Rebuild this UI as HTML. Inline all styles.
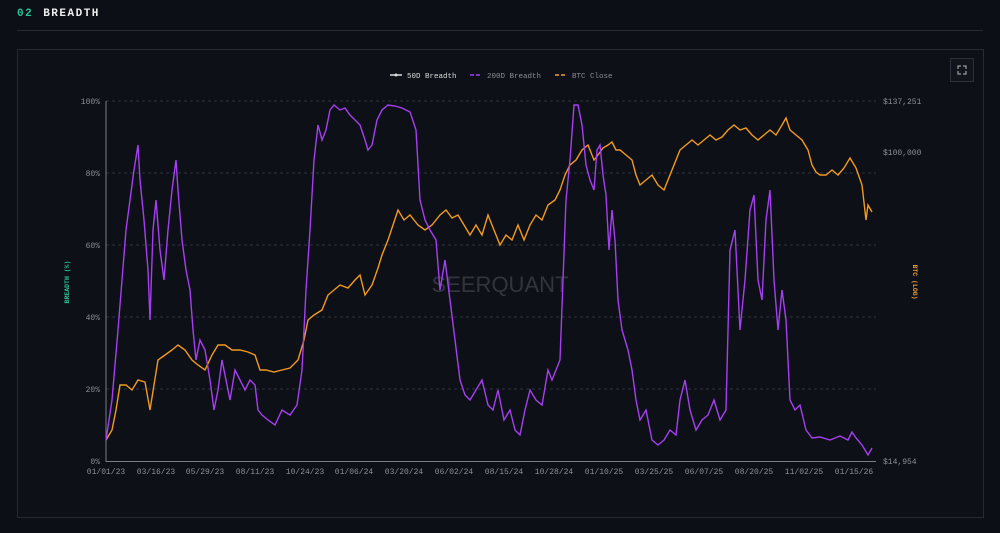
<!DOCTYPE html>
<html><head><meta charset="utf-8"><style>
html,body{margin:0;padding:0;background:#0c0f16;width:1000px;height:533px;overflow:hidden;font-family:"Liberation Mono",monospace}
.h{position:absolute;left:17px;top:8px;font-size:11px;font-weight:bold;letter-spacing:1.5px;color:#eee}
.h span{color:#2fbf9a;margin-right:10px}
.hl{position:absolute;left:17px;top:30px;width:966px;height:1px;background:#262a33}
.panel{position:absolute;left:17px;top:49px;width:965px;height:467px;border:1px solid #262a33;background:#0d1017}
.btn{position:absolute;left:950px;top:58px;width:22px;height:22px;border:1px solid #2c313b;background:#11141b}
</style></head><body>
<div class="h"><span>02</span>BREADTH</div>
<div class="hl"></div>
<div class="panel"></div>
<div class="btn"><svg width="22" height="22"><path d="M7 10V7h3M12 7h3v3M15 12v3h-3M10 15H7v-3" stroke="#bbb" fill="none" stroke-width="1"/></svg></div>
<svg width="1000" height="533" style="position:absolute;left:0;top:0" font-family="Liberation Mono,monospace">
<g stroke="#2e333d" stroke-dasharray="3,3" stroke-width="1">
<line x1="106" y1="101" x2="876" y2="101"/><line x1="106" y1="173" x2="876" y2="173"/><line x1="106" y1="245" x2="876" y2="245"/><line x1="106" y1="317" x2="876" y2="317"/><line x1="106" y1="389" x2="876" y2="389"/>
</g>
<g font-size="8" fill="#8a8f99" text-anchor="end">
<text x="100" y="104">100%</text><text x="100" y="176">80%</text><text x="100" y="248">60%</text><text x="100" y="320">40%</text><text x="100" y="392">20%</text><text x="100" y="464">0%</text>
</g>
<g font-size="8" fill="#8a8f99"><text x="883" y="104">$137,251</text><text x="883" y="155">$100,000</text><text x="883" y="464">$14,954</text></g>
<line x1="106" y1="101" x2="106" y2="462" stroke="#777c86"/>
<line x1="106" y1="461.5" x2="876" y2="461.5" stroke="#777c86"/>
<g font-size="8" fill="#8a8f99" text-anchor="middle">
<text x="106" y="474">01/01/23</text><text x="156" y="474">03/16/23</text><text x="205" y="474">05/29/23</text><text x="255" y="474">08/11/23</text><text x="305" y="474">10/24/23</text><text x="354" y="474">01/06/24</text><text x="404" y="474">03/20/24</text><text x="454" y="474">06/02/24</text><text x="504" y="474">08/15/24</text><text x="554" y="474">10/28/24</text><text x="604" y="474">01/10/25</text><text x="654" y="474">03/25/25</text><text x="704" y="474">06/07/25</text><text x="754" y="474">08/20/25</text><text x="804" y="474">11/02/25</text><text x="854" y="474">01/15/26</text>
</g>
<text x="500" y="292" font-family="Liberation Sans,sans-serif" font-size="22" fill="#3a3f48" text-anchor="middle" opacity="0.8">SEERQUANT</text>
<text transform="translate(69,282) rotate(-90)" font-size="6.5" fill="#2fbf9a" text-anchor="middle" font-weight="bold">BREADTH (%)</text>
<text transform="translate(913,282) rotate(90)" font-size="6.5" fill="#f0a030" text-anchor="middle" font-weight="bold">BTC (LOG)</text>
<g font-size="7.5">
<line x1="390" y1="75" x2="402" y2="75" stroke="#ddd" stroke-width="1.5"/><circle cx="396" cy="75" r="1.5" fill="#ddd"/><text x="407" y="78" fill="#ddd">50D Breadth</text>
<line x1="470" y1="75" x2="482" y2="75" stroke="#a63ff0" stroke-width="1.5" stroke-dasharray="4,2"/><text x="487" y="78" fill="#8a8f99">200D Breadth</text>
<line x1="555" y1="75" x2="567" y2="75" stroke="#f0a030" stroke-width="1.5" stroke-dasharray="4,2"/><text x="572" y="78" fill="#8a8f99">BTC Close</text>
</g>
<polyline fill="none" stroke="#f39a1f" stroke-width="1.4" points="106,440 112,430 116,410 120,385 126,385 132,390 138,380 145,382 150,410 154,385 158,360 165,355 172,350 178,345 185,350 192,360 198,365 205,370 212,355 218,345 225,345 232,350 240,350 248,352 255,355 260,370 266,370 274,372 282,370 290,368 298,360 304,340 308,320 314,315 322,310 328,295 334,290 340,285 348,288 355,280 360,275 365,295 372,285 378,268 382,255 388,240 393,225 398,210 404,220 410,215 418,225 425,230 432,225 440,215 446,210 452,218 458,215 464,225 470,235 476,225 482,235 488,215 494,230 500,245 506,235 512,240 518,225 524,240 530,225 536,215 542,220 548,205 555,200 560,190 565,175 570,165 576,160 582,150 588,145 594,160 598,155 603,148 608,145 612,142 616,150 620,150 626,155 632,160 636,175 640,185 646,180 652,175 658,185 664,190 668,180 674,165 680,150 686,145 692,140 698,145 704,140 710,135 716,140 722,137 728,130 734,125 740,130 746,128 752,135 758,140 764,135 770,130 776,135 782,125 786,118 790,130 796,135 802,140 808,150 812,165 816,172 820,175 826,175 832,170 838,175 844,168 850,158 856,168 862,185 866,220 868,205 872,212"/>
<polyline fill="none" stroke="#a63ff0" stroke-width="1.4" points="106,440 112,400 118,330 122,280 126,230 130,200 134,170 138,145 140,180 144,220 148,270 150,320 153,230 156,200 160,250 164,280 168,230 172,190 176,160 178,190 182,240 186,270 190,290 193,330 196,360 200,340 205,350 210,380 214,410 218,390 222,360 226,380 230,400 235,370 240,380 245,390 250,380 255,385 258,410 262,415 268,420 275,425 282,410 290,415 297,405 302,370 306,290 310,230 314,160 318,125 322,140 326,130 330,110 334,105 340,110 345,108 350,115 355,120 360,125 365,140 368,150 372,145 377,120 382,110 388,105 395,106 402,108 410,112 416,130 420,200 425,220 430,230 436,240 440,290 445,260 450,300 455,340 460,380 465,395 470,400 476,390 482,380 488,405 493,410 498,390 504,420 510,410 515,430 520,435 525,410 530,390 536,400 542,405 548,370 552,380 556,370 560,360 563,280 566,200 570,160 574,105 578,105 582,125 586,165 590,180 594,190 597,150 600,145 603,175 606,195 609,250 612,210 615,240 618,300 622,330 628,350 632,370 636,400 640,420 646,410 652,440 658,445 664,440 670,430 676,435 680,400 685,380 690,410 696,430 702,420 708,415 714,400 720,420 726,410 730,250 735,230 740,330 745,280 750,210 754,195 758,280 762,300 766,220 770,190 774,280 778,330 782,290 786,320 790,400 795,410 800,405 806,430 812,438 820,437 830,440 840,436 848,440 852,432 856,438 862,445 868,455 872,448"/>
</svg>
</body></html>
